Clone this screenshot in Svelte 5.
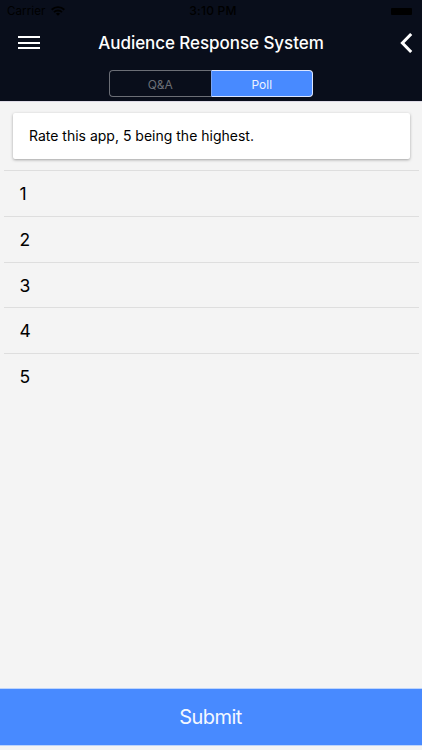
<script>
  let selected = $state('Poll');
  const tabs = ['Q&A', 'Poll'];
  const choices = [1, 2, 3, 4, 5];
</script>

<div class="screen">
  <header>
    <div class="status">
      <div class="carrier">
        <span>Carrier</span>
        <svg width="14" height="10" viewBox="0 0 14 10" fill="none" stroke="#000" stroke-width="1.9">
          <path d="M0.7 3.7a9 9 0 0 1 12.6 0M3 6.1a5.7 5.7 0 0 1 8 0" />
          <path d="M7 9.8L4.9 7.7a3 3 0 0 1 4.2 0z" fill="#000" stroke="none" />
        </svg>
      </div>
      <span class="time">3:10 PM</span>
      <div class="power"><span class="battery"></span></div>
    </div>
    <div class="nav">
      <button class="menu" aria-label="Menu"><i></i><i></i><i></i></button>
      <h1>Audience Response System</h1>
      <button class="back" aria-label="Back">
        <svg width="13" height="20" viewBox="0 0 13 20" fill="none" stroke="#fff" stroke-width="3">
          <path d="M11.2 1L2.4 10l8.8 9" />
        </svg>
      </button>
    </div>
    <div class="segment">
      {#each tabs as tab}
        <button class:active={selected === tab} onclick={() => (selected = tab)}>{tab}</button>
      {/each}
    </div>
  </header>
  <main>
    <div class="card">Rate this app, 5 being the highest.</div>
    <ul>
      {#each choices as choice}
        <li>{choice}</li>
      {/each}
    </ul>
  </main>
  <button class="submit">Submit</button>
</div>

<style>
  .screen {
    width: 422px;
    height: 750px;
    box-sizing: border-box;
    padding-bottom: 5px;
    display: flex;
    flex-direction: column;
    overflow: hidden;
    background: #f4f4f4;
    font-family: Inter, "Liberation Sans", sans-serif;
    color: #000;
  }
  button {
    font: inherit;
    border: 0;
    padding: 0;
    margin: 0;
    background: none;
    color: inherit;
  }
  svg { display: block; }
  header {
    height: 101px;
    flex: none;
    background: #090e1b;
    box-shadow: 0 1px 0 #dedbe6;
  }
  .status {
    height: 22px;
    display: grid;
    grid-template-columns: 1fr auto 1fr;
    align-items: center;
    padding: 0 9px 0 7px;
    font-size: 12px;
    line-height: 22px;
  }
  .carrier {
    display: flex;
    align-items: center;
    gap: 6px;
    font-size: 11.5px;
    letter-spacing: 0.1px;
  }
  .time {
    font-weight: 500;
    letter-spacing: 0.25px;
    padding-left: 6px;
  }
  .power { display: flex; justify-content: flex-end; }
  .battery {
    width: 21px;
    height: 7px;
    margin-right: 1px;
    background: #000;
    border-radius: 1px;
  }
  .nav {
    height: 48px;
    display: grid;
    grid-template-columns: 1fr auto 1fr;
    align-items: center;
    padding: 0 9px 6px;
    box-sizing: border-box;
  }
  .menu {
    width: 22px;
    height: 13px;
    margin: -1px 0 0 9px;
    display: flex;
    flex-direction: column;
    justify-content: space-between;
  }
  .menu i { height: 2px; background: #fff; }
  .back { justify-self: end; }
  h1 {
    margin: 0;
    font-size: 17px;
    line-height: 24px;
    font-weight: 500;
    letter-spacing: -0.06px;
    color: #fff;
    white-space: nowrap;
  }
  .segment {
    width: 204px;
    height: 27px;
    margin: 0 auto;
    display: flex;
  }
  .segment button {
    flex: 1;
    box-sizing: border-box;
    border: 1px solid #6b6e76;
    font-size: 12px;
    line-height: 27px;
    color: #6b6e76;
  }
  .segment button:first-child { border-radius: 4px 0 0 4px; border-right: 0; }
  .segment button:last-child { border-radius: 0 4px 4px 0; }
  .segment .active {
    background: #488aff;
    border-color: #dce6ff;
    border-left-color: #7ba5f3;
    color: #edf3ff;
  }
  main { flex: 1; }
  .card {
    margin: 12px 12px 0 13px;
    height: 46px;
    padding-left: 16px;
    line-height: 46px;
    font-size: 14px;
    background: #fff;
    border-radius: 2px;
    box-shadow: 0 1px 3px rgba(0, 0, 0, 0.34);
  }
  ul {
    list-style: none;
    margin: 11px 3px 0 4px;
    padding: 0;
  }
  li {
    height: 45.75px;
    box-sizing: border-box;
    border-top: 1px solid #dedede;
    padding-left: 15.5px;
    line-height: 46px;
    font-size: 17.5px;
  }
  .submit {
    height: 56px;
    flex: none;
    background: #488aff;
    color: #f4f8ff;
    font-size: 20px;
    letter-spacing: -0.55px;
    padding-right: 1px;
    line-height: 56px;
    box-shadow: 0 0 0 1px #bdd4fb;
  }
</style>
